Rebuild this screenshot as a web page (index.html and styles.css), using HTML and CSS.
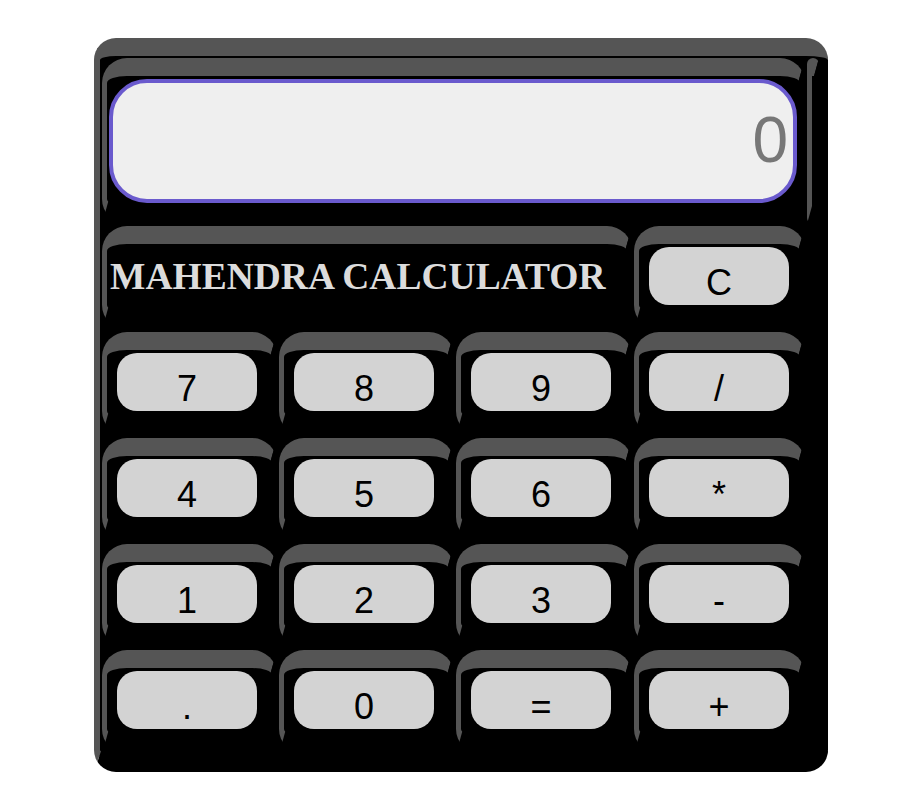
FILE: index.html
```html
<!DOCTYPE html>
<html>
<head>
<meta charset="utf-8">
<title>Mahendra Calculator</title>
<link rel="stylesheet" href="styles.css">
</head>
<body>
<div class="calc">
  <div class="row row-display">
    <div class="cell cell-display"><div class="display">0</div></div>
    <div class="cell cell-tail"></div>
  </div>
  <div class="row">
    <div class="cell cell-title"><span class="title">MAHENDRA CALCULATOR</span></div>
    <div class="cell"><button class="key">C</button></div>
  </div>
  <div class="row">
    <div class="cell"><button class="key">7</button></div>
    <div class="cell"><button class="key">8</button></div>
    <div class="cell"><button class="key">9</button></div>
    <div class="cell"><button class="key">/</button></div>
  </div>
  <div class="row">
    <div class="cell"><button class="key">4</button></div>
    <div class="cell"><button class="key">5</button></div>
    <div class="cell"><button class="key">6</button></div>
    <div class="cell"><button class="key">*</button></div>
  </div>
  <div class="row">
    <div class="cell"><button class="key">1</button></div>
    <div class="cell"><button class="key">2</button></div>
    <div class="cell"><button class="key">3</button></div>
    <div class="cell"><button class="key">-</button></div>
  </div>
  <div class="row">
    <div class="cell"><button class="key">.</button></div>
    <div class="cell"><button class="key">0</button></div>
    <div class="cell"><button class="key">=</button></div>
    <div class="cell"><button class="key">+</button></div>
  </div>
</div>
</body>
</html>
```
FILE: styles.css
```css
html, body {
  margin: 0;
  padding: 0;
  background: #ffffff;
}

body {
  font-family: "Liberation Sans", Arial, sans-serif;
}

.calc {
  box-sizing: border-box;
  width: 734px;
  height: 734px;
  margin: 38px 0 0 94px;
  background: #000000;
  border-style: solid;
  border-width: 18px 0 18px 6px;
  border-color: #555555 #000000 #000000 #555555;
  border-radius: 22px;
  padding: 2px 9px 0 2px;
  display: flex;
  flex-direction: column;
  gap: 2px;
}

.row {
  display: grid;
  grid-template-columns: 175px 175px 176px 171px 12px;
  gap: 2px;
  height: 104px;
}

.row-display {
  height: 166px;
}

.cell {
  box-sizing: border-box;
  border-style: solid;
  border-width: 18px 5px 18px 5px;
  border-color: #555555 #000000 #000000 #555555;
  border-radius: 25px;
  padding: 3px 0 0 10px;
}

.cell-display {
  grid-column: span 4;
  padding: 3px 0 0 2px;
}

.cell-tail {
  padding: 0;
}

.cell-title {
  grid-column: span 3;
  padding: 12px 0 0 3px;
}

.display {
  box-sizing: border-box;
  width: 688px;
  height: 124px;
  border: 4px solid #6a5acd;
  border-radius: 38px;
  background: #efefef;
  color: #777777;
  font-family: "Liberation Sans", Arial, sans-serif;
  font-size: 64px;
  line-height: 114px;
  text-align: right;
  padding-right: 5px;
}

.title {
  display: block;
  font-family: "Liberation Serif", "Times New Roman", serif;
  font-weight: bold;
  font-size: 37.5px;
  line-height: 41px;
  color: #dcdcdc;
  white-space: nowrap;
}

.key {
  box-sizing: border-box;
  display: block;
  width: 140px;
  height: 58px;
  margin: 0;
  border: none;
  border-radius: 20px;
  background: #d3d3d3;
  color: #000000;
  font-family: "Liberation Sans", Arial, sans-serif;
  font-size: 36px;
  line-height: 41px;
  padding: 12px 0 0 0;
  text-align: center;
}
```
